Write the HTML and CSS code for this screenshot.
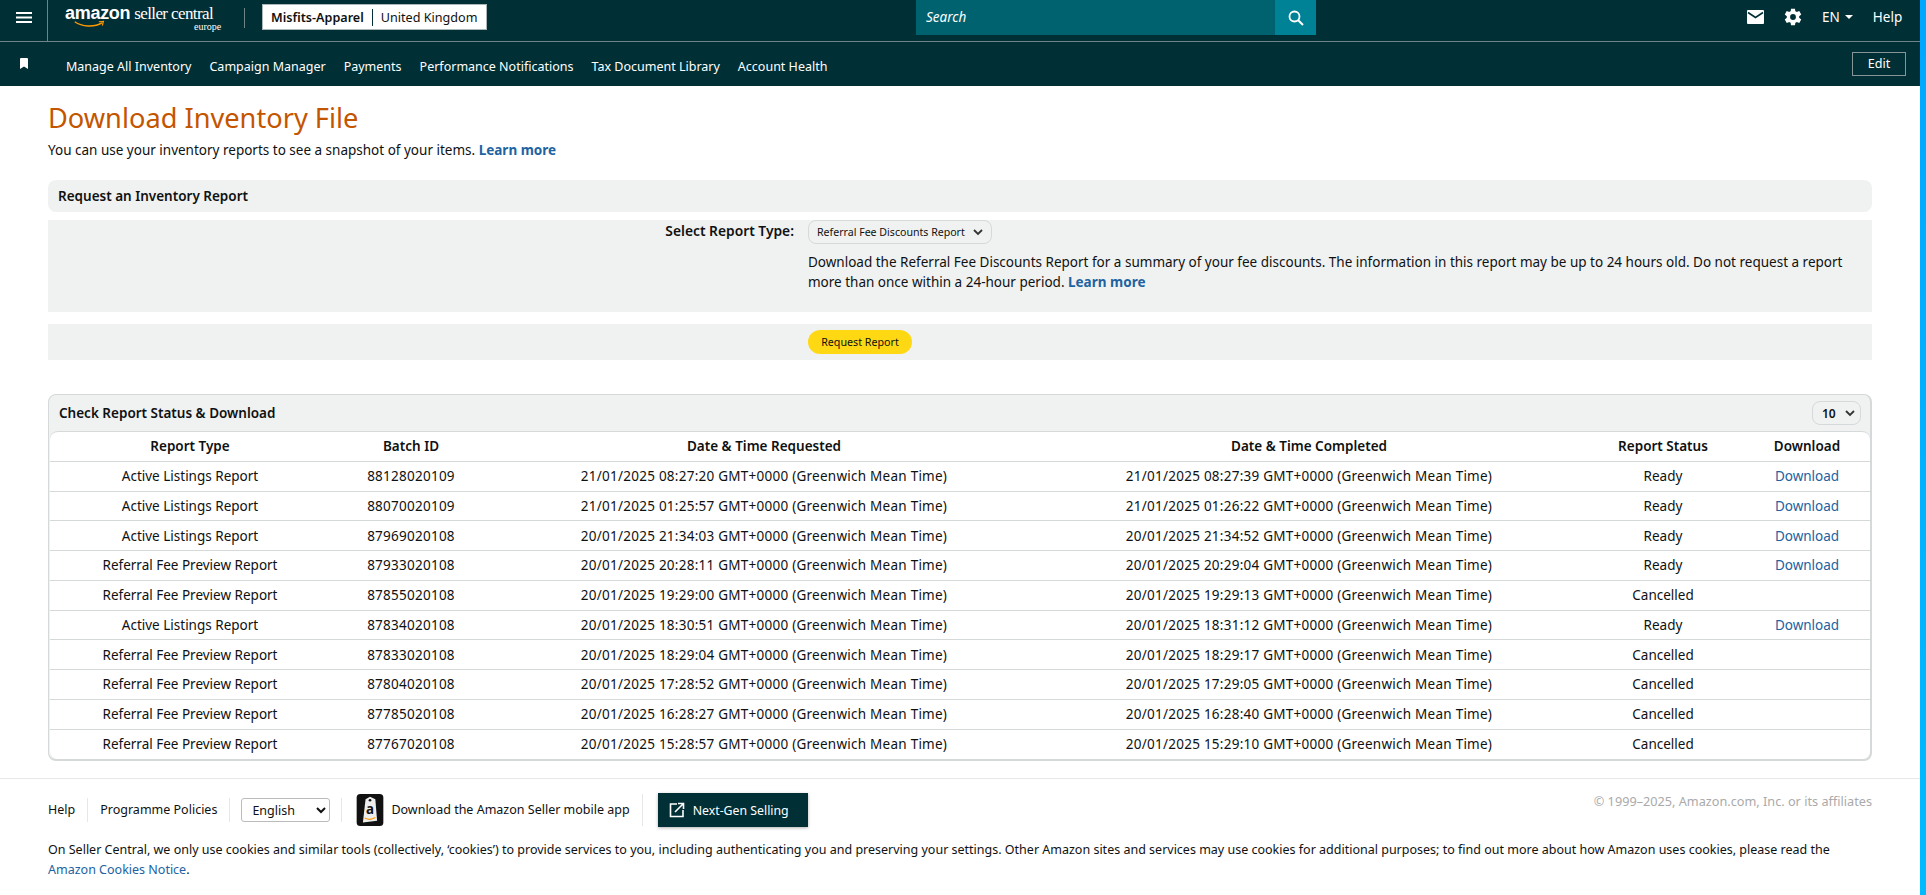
FILE: index.html
```html
<!DOCTYPE html>
<html lang="en">
<head>
    <meta charset="UTF-8">
    <meta name="viewport" content="width=device-width, initial-scale=1.0">
    <title>Download Inventory File</title>
    <link rel="stylesheet" href="styles.css">
</head>
<body>
    <div class="page">
        <header class="nav">
            <div class="nav-top">
                <div class="menu-cell">
                    <svg class="menu-icon" viewBox="0 0 16 11"><path d="M0 0h16v2H0zM0 4.5h16v2H0zM0 9h16v2H0z" fill="#fff"/></svg>
                </div>
                <div class="logo">
                    <div class="logo-line">
                        <span class="logo-amazon">amazon</span>
                        <span class="logo-seller">seller central</span>
                    </div>
                    <span class="logo-region">europe</span>
                    <svg class="logo-smile" viewBox="0 0 40 10"><path d="M1 1.5C10 8 26 9 36 3" fill="none" stroke="#f90" stroke-width="1.8"/><path d="M32 1.5l6-.5-1.5 5.5" fill="none" stroke="#f90" stroke-width="1.5"/></svg>
                </div>
                <div class="account">
                    <span class="account-name">Misfits-Apparel</span>
                    <span class="account-region">United Kingdom</span>
                </div>
                <div class="search">
                    <span class="search-text">Search</span>
                    <span class="search-btn">
                        <svg viewBox="0 0 16 16" width="16" height="16"><circle cx="6.5" cy="6.5" r="5" fill="none" stroke="#fff" stroke-width="1.8"/><path d="M10.2 10.2L15 15" stroke="#fff" stroke-width="2"/></svg>
                    </span>
                </div>
                <div class="nav-tools">
                    <svg class="tool-mail" viewBox="0 0 17 14"><path d="M1 0h15a1 1 0 0 1 1 1v12a1 1 0 0 1-1 1H1a1 1 0 0 1-1-1V1a1 1 0 0 1 1-1z" fill="#fff"/><path d="M1 2.5l7.5 5 7.5-5" fill="none" stroke="#002f36" stroke-width="1.6"/></svg>
                    <svg class="tool-gear" viewBox="0 0 24 24"><path fill="#fff" fill-rule="evenodd" d="M19.4 13a7.6 7.6 0 0 0 0-2l2.5-1.9-2.4-4.2-3 1.2a7.4 7.4 0 0 0-1.7-1L14.4 2H9.6l-.4 3.1a7.4 7.4 0 0 0-1.7 1l-3-1.2-2.4 4.2L4.6 11a7.6 7.6 0 0 0 0 2l-2.5 1.9 2.4 4.2 3-1.2c.5.4 1.1.7 1.7 1l.4 3.1h4.8l.4-3.1c.6-.3 1.2-.6 1.7-1l3 1.2 2.4-4.2zM12 15.5a3.5 3.5 0 1 1 0-7 3.5 3.5 0 0 1 0 7z"/></svg>
                    <span class="tool-lang">EN<i class="caret"></i></span>
                    <span class="tool-help">Help</span>
                </div>
            </div>
            <div class="nav-bottom">
                <svg class="bookmark" viewBox="0 0 8 11"><path d="M0 1a1 1 0 0 1 1-1h6a1 1 0 0 1 1 1v10L4 8.5 0 11z" fill="#fff"/></svg>
                <a class="nav-link" href="#">Manage All Inventory</a>
                <a class="nav-link" href="#">Campaign Manager</a>
                <a class="nav-link" href="#">Payments</a>
                <a class="nav-link" href="#">Performance Notifications</a>
                <a class="nav-link" href="#">Tax Document Library</a>
                <a class="nav-link" href="#">Account Health</a>
                <span class="edit-btn">Edit</span>
            </div>
        </header>

        <main class="content">
            <h1 class="page-title">Download Inventory File</h1>
            <p class="page-sub">You can use your inventory reports to see a snapshot of your items. <a class="learn" href="#">Learn more</a></p>

            <div class="section-bar">Request an Inventory Report</div>
            <div class="panel">
                <div class="panel-label">Select Report Type:</div>
                <div class="panel-body">
                    <span class="dropdown">Referral Fee Discounts Report
                        <svg class="chev" viewBox="0 0 10 7"><path d="M1 1l4 4 4-4" fill="none" stroke="#333" stroke-width="1.8"/></svg>
                    </span>
                    <p class="panel-text">Download the Referral Fee Discounts Report for a summary of your fee discounts. The information in this report may be up to 24 hours old. Do not request a report more than once within a 24-hour period. <a class="learn" href="#">Learn more</a></p>
                </div>
            </div>
            <div class="action-bar">
                <span class="request-btn">Request Report</span>
            </div>

            <section class="status-box">
                <div class="status-head">
                    <span>Check Report Status &amp; Download</span>
                    <span class="dropdown page-size">10
                        <svg class="chev" viewBox="0 0 10 7"><path d="M1 1l4 4 4-4" fill="none" stroke="#333" stroke-width="1.8"/></svg>
                    </span>
                </div>
                <table class="status-table">
                    <colgroup>
                        <col class="col-type"><col class="col-batch"><col class="col-req"><col class="col-done"><col class="col-status"><col>
                    </colgroup>
                    <thead>
                        <tr><th>Report Type</th><th>Batch ID</th><th>Date &amp; Time Requested</th><th>Date &amp; Time Completed</th><th>Report Status</th><th>Download</th></tr>
                    </thead>
                    <tbody>
                        <tr><td>Active Listings Report</td><td>88128020109</td><td>21/01/2025 08:27:20 GMT+0000 (Greenwich Mean Time)</td><td>21/01/2025 08:27:39 GMT+0000 (Greenwich Mean Time)</td><td>Ready</td><td><a href="#">Download</a></td></tr>
                        <tr><td>Active Listings Report</td><td>88070020109</td><td>21/01/2025 01:25:57 GMT+0000 (Greenwich Mean Time)</td><td>21/01/2025 01:26:22 GMT+0000 (Greenwich Mean Time)</td><td>Ready</td><td><a href="#">Download</a></td></tr>
                        <tr><td>Active Listings Report</td><td>87969020108</td><td>20/01/2025 21:34:03 GMT+0000 (Greenwich Mean Time)</td><td>20/01/2025 21:34:52 GMT+0000 (Greenwich Mean Time)</td><td>Ready</td><td><a href="#">Download</a></td></tr>
                        <tr><td>Referral Fee Preview Report</td><td>87933020108</td><td>20/01/2025 20:28:11 GMT+0000 (Greenwich Mean Time)</td><td>20/01/2025 20:29:04 GMT+0000 (Greenwich Mean Time)</td><td>Ready</td><td><a href="#">Download</a></td></tr>
                        <tr><td>Referral Fee Preview Report</td><td>87855020108</td><td>20/01/2025 19:29:00 GMT+0000 (Greenwich Mean Time)</td><td>20/01/2025 19:29:13 GMT+0000 (Greenwich Mean Time)</td><td>Cancelled</td><td></td></tr>
                        <tr><td>Active Listings Report</td><td>87834020108</td><td>20/01/2025 18:30:51 GMT+0000 (Greenwich Mean Time)</td><td>20/01/2025 18:31:12 GMT+0000 (Greenwich Mean Time)</td><td>Ready</td><td><a href="#">Download</a></td></tr>
                        <tr><td>Referral Fee Preview Report</td><td>87833020108</td><td>20/01/2025 18:29:04 GMT+0000 (Greenwich Mean Time)</td><td>20/01/2025 18:29:17 GMT+0000 (Greenwich Mean Time)</td><td>Cancelled</td><td></td></tr>
                        <tr><td>Referral Fee Preview Report</td><td>87804020108</td><td>20/01/2025 17:28:52 GMT+0000 (Greenwich Mean Time)</td><td>20/01/2025 17:29:05 GMT+0000 (Greenwich Mean Time)</td><td>Cancelled</td><td></td></tr>
                        <tr><td>Referral Fee Preview Report</td><td>87785020108</td><td>20/01/2025 16:28:27 GMT+0000 (Greenwich Mean Time)</td><td>20/01/2025 16:28:40 GMT+0000 (Greenwich Mean Time)</td><td>Cancelled</td><td></td></tr>
                        <tr><td>Referral Fee Preview Report</td><td>87767020108</td><td>20/01/2025 15:28:57 GMT+0000 (Greenwich Mean Time)</td><td>20/01/2025 15:29:10 GMT+0000 (Greenwich Mean Time)</td><td>Cancelled</td><td></td></tr>
                    </tbody>
                </table>
            </section>
        </main>

        <footer class="footer">
            <div class="footer-row">
                <a class="foot-link" href="#">Help</a>
                <a class="foot-link" href="#">Programme Policies</a>
                <div class="foot-cell">
                    <select class="lang-select"><option>English</option></select>
                </div>
                <a class="foot-link app-link" href="#">
                    <svg class="app-icon" viewBox="0 0 30 36">
                        <rect width="30" height="36" rx="4" fill="#111"/>
                        <path d="M10 6l5-3 6 3 2 24-16 2z" fill="#eee"/>
                        <circle cx="15" cy="7" r="1.5" fill="#111"/>
                        <text x="15" y="23" text-anchor="middle" font-size="15" font-weight="700" fill="#111">a</text>
                        <path d="M9 27c4 2 8 2 12-.5" fill="none" stroke="#f90" stroke-width="1.4"/>
                    </svg>
                    Download the Amazon Seller mobile app
                </a>
                <span class="next-gen">
                    <svg viewBox="0 0 16 16" width="16" height="16"><path d="M8 2H1.5v12.5H14V8" fill="none" stroke="#fff" stroke-width="1.6"/><path d="M6 10l8-8M9 1.5h5.5V7" fill="none" stroke="#fff" stroke-width="1.6"/></svg>
                    Next-Gen Selling
                </span>
                <span class="copyright">© 1999–2025, Amazon.com, Inc. or its affiliates</span>
            </div>
            <p class="cookies">On Seller Central, we only use cookies and similar tools (collectively, ‘cookies’) to provide services to you, including authenticating you and preserving your settings. Other Amazon sites and services may use cookies for additional purposes; to find out more about how Amazon uses cookies, please read the <a href="#">Amazon Cookies Notice</a>.</p>
        </footer>
    </div>
    <div class="edge-strip"></div>
</body>
</html>
```

FILE: styles.css
```css
* {
    margin: 0;
    padding: 0;
    box-sizing: border-box;
}

body {
    font-family: "Noto Sans", Arial, sans-serif;
    font-size: 13.5px;
    color: #0f1111;
    background: white;
    display: flex;
    height: 895px;
    overflow: hidden;
}

a {
    text-decoration: none;
}

.page {
    flex: 1;
    min-width: 0;
}

.edge-strip {
    width: 6px;
    background: linear-gradient(180deg, #00a8ff 0%, #00bbff 100%);
}

/* top nav */
.nav {
    background: #002f36;
    color: white;
    height: 86px;
}

.nav-top {
    height: 42px;
    display: flex;
    border-bottom: 1px solid #6f8487;
}

.menu-cell {
    width: 48px;
    display: flex;
    padding: 12px 0 0 16px;
    border-right: 1px solid #6f8487;
}

.menu-icon {
    width: 16px;
    height: 11px;
}

.logo {
    width: 179px;
    margin-left: 17px;
    padding-top: 2px;
    position: relative;
}

.logo-line {
    display: flex;
    align-items: baseline;
    gap: 4px;
    line-height: 22px;
}

.logo-amazon {
    font-family: "Liberation Sans", sans-serif;
    font-weight: 700;
    font-size: 18px;
    letter-spacing: -0.3px;
}

.logo-seller {
    font-family: "Liberation Serif", serif;
    font-size: 17px;
    letter-spacing: -0.6px;
}

.logo-region {
    position: absolute;
    left: 129px;
    top: 21px;
    font-family: "Liberation Serif", serif;
    font-size: 10px;
}

.logo-smile {
    position: absolute;
    left: 9px;
    top: 20px;
    width: 31px;
    height: 9px;
}

.account {
    height: 26px;
    margin: 4px 0 0 18px;
    width: 225px;
    display: flex;
    align-items: center;
    padding: 0 8px;
    background: white;
    border: 1px solid #aab7b8;
    color: #0f1111;
    font-size: 12.6px;
    white-space: nowrap;
    position: relative;
}

.account::before {
    content: "";
    position: absolute;
    left: -19px;
    top: 3px;
    height: 20px;
    border-left: 1px solid #6f8487;
}

.account-name {
    font-weight: 600;
    padding-right: 8px;
    border-right: 1px solid #002f36;
    line-height: 17px;
}

.account-region {
    padding-left: 8px;
}

.search {
    width: 400px;
    height: 35px;
    margin-left: 429px;
    display: flex;
    background: #00626f;
}

.search-text {
    flex: 1;
    padding-left: 10px;
    line-height: 35px;
    font-style: italic;
    font-size: 13.5px;
}

.search-btn {
    width: 41px;
    background: #008296;
    display: flex;
    align-items: center;
    justify-content: center;
}

.nav-tools {
    flex: 1;
    display: flex;
    align-items: center;
    height: 34px;
    padding-left: 431px;
}

.tool-mail {
    width: 17px;
    height: 14px;
}

.tool-gear {
    width: 20px;
    height: 20px;
    margin-left: 19px;
}

.tool-lang {
    margin-left: 19px;
    font-size: 13.5px;
    display: flex;
    align-items: center;
}

.caret {
    width: 0;
    height: 0;
    margin-left: 5px;
    border: 4px solid transparent;
    border-top: 4px solid white;
    border-bottom: 0;
}

.tool-help {
    margin-left: 20px;
    font-size: 13.5px;
}

.nav-bottom {
    height: 44px;
    display: flex;
    align-items: center;
    padding: 4px 14px 0 20px;
}

.bookmark {
    width: 8px;
    height: 11px;
    margin: 0 38px 6px 0;
}

.nav-link {
    color: white;
    font-size: 12.5px;
    margin-right: 18px;
}

.edit-btn {
    margin: 0 0 4px auto;
    width: 54px;
    height: 24px;
    line-height: 22px;
    text-align: center;
    font-size: 12.6px;
    border: 1px solid #879596;
}

/* main area */
.content {
    padding: 14px 48px 0;
}

.page-title {
    color: #c45500;
    font-size: 27.2px;
    font-weight: 400;
    line-height: 36px;
}

.page-sub {
    margin-top: 4px;
    line-height: 20px;
}

.learn {
    color: #2162a1;
    font-weight: 700;
}

.section-bar {
    margin-top: 20px;
    height: 32px;
    line-height: 32px;
    padding-left: 10px;
    background: #f0f2f2;
    border-radius: 8px;
    font-weight: 600;
}

.panel {
    margin-top: 8px;
    height: 92px;
    display: flex;
    background: #f0f2f2;
}

.panel-label {
    width: 746px;
    text-align: right;
    padding-top: 1px;
    font-size: 13.8px;
    font-weight: 600;
    line-height: 20px;
}

.panel-body {
    margin-left: 14px;
    flex: 1;
    padding-right: 20px;
}

.dropdown {
    display: inline-flex;
    align-items: center;
    height: 24px;
    padding: 0 8px;
    gap: 8px;
    border: 1px solid #d5d9d9;
    border-radius: 8px;
    background: #f0f2f2;
    font-size: 10.6px;
}

.chev {
    width: 10px;
    height: 7px;
}

.panel-text {
    margin-top: 8px;
    line-height: 20px;
}

.action-bar {
    margin-top: 12px;
    height: 36px;
    padding: 6px 0 0 760px;
    background: #f0f2f2;
}

.request-btn {
    display: block;
    width: 104px;
    height: 24px;
    line-height: 24px;
    text-align: center;
    font-size: 10.7px;
    background: #ffd814;
    border-radius: 12px;
}

/* report table */
.status-box {
    margin-top: 34px;
    background: #f0f2f2;
    border: 1px solid #d5d9d9;
    border-width: 1px 2px 2px 1px;
    border-radius: 8px;
}

.status-head {
    height: 36px;
    display: flex;
    align-items: center;
    justify-content: space-between;
    padding: 0 9px 0 10px;
    font-weight: 600;
}

.page-size {
    width: 49px;
    font-weight: 600;
    font-size: 12px;
    padding: 0 0 0 9px;
    gap: 9px;
}

.status-table {
    table-layout: fixed;
    border-collapse: separate;
    border-spacing: 0;
    background: white;
    border-radius: 8px;
    margin-left: 1px;
    width: calc(100% - 1px);
    border-top: 1px solid #d5d9d9;
}

.col-type {
    width: 280px;
}

.col-batch {
    width: 162px;
}

.col-req {
    width: 544px;
}

.col-done {
    width: 546px;
}

.col-status {
    width: 162px;
}

.status-table th,
.status-table td {
    height: 29.75px;
    text-align: center;
    border-bottom: 1px solid #d5d9d9;
}

.status-table th {
    font-weight: 600;
}

.status-table td:nth-child(n+2):nth-child(-n+4) {
    letter-spacing: 0.25px;
}

.status-table tbody tr:last-child td {
    border-bottom: 0;
}

.status-table a {
    color: #2162a1;
}

/* footer */
.footer {
    margin-top: 17px;
    padding: 0 48px;
    border-top: 1px solid #e7e7e7;
}

.footer-row {
    display: flex;
    align-items: center;
    height: 56px;
    padding-top: 6px;
}

.foot-link {
    color: #0f1111;
    font-size: 12.5px;
    line-height: 24px;
    padding-right: 12px;
    margin-right: 12px;
    border-right: 1px solid #e7e7e7;
}

.foot-cell {
    margin-left: -1px;
    padding-right: 11px;
    margin-right: 13px;
    border-right: 1px solid #e7e7e7;
}

.lang-select {
    display: block;
    width: 89px;
    height: 24px;
    font-family: inherit;
    font-size: 12.5px;
    padding-left: 6px;
    background: white;
    color: #0f1111;
    border: 1px solid #bbb;
    border-radius: 3px;
}

.app-link {
    display: flex;
    align-items: center;
    gap: 6px;
    line-height: 30px;
    margin-right: 15px;
    padding-right: 12px;
}

.app-icon {
    width: 30px;
    height: 32px;
}

.next-gen {
    display: flex;
    align-items: center;
    gap: 8px;
    height: 34px;
    width: 150px;
    padding-left: 11px;
    background: #002f36;
    color: white;
    font-size: 12.3px;
    box-shadow: 0 1px 3px rgba(0, 0, 0, 0.3);
}

.copyright {
    margin-left: auto;
    color: #aaa;
    font-size: 12.7px;
    align-self: flex-start;
    padding-top: 7px;
}

.cookies {
    margin-top: 5px;
    font-size: 12.5px;
    line-height: 20px;
}

.cookies a {
    color: #2162a1;
}
```
